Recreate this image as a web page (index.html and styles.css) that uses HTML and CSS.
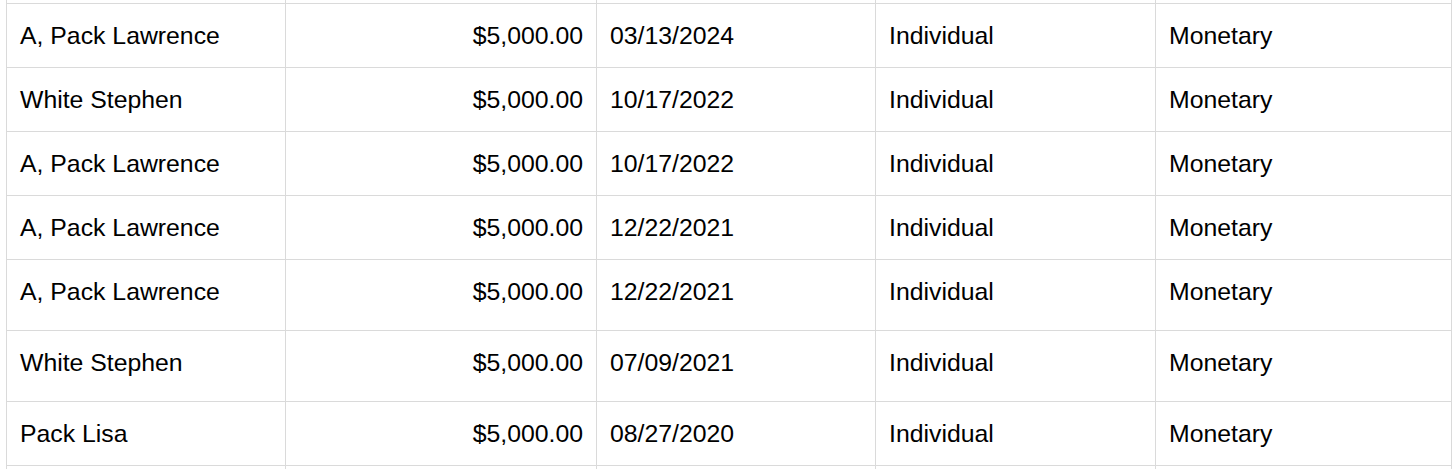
FILE: index.html
```html
<!DOCTYPE html>
<html lang="en">
<head>
<meta charset="utf-8">
<title>Contributions</title>
<link rel="stylesheet" href="styles.css">
</head>
<body>
<div class="sheet">
  <div class="row cut-top"><div class="cell"></div><div class="cell"></div><div class="cell"></div><div class="cell"></div><div class="cell"></div></div>
  <div class="row"><div class="cell">A, Pack Lawrence</div><div class="cell num">$5,000.00</div><div class="cell">03/13/2024</div><div class="cell">Individual</div><div class="cell">Monetary</div></div>
  <div class="row"><div class="cell">White Stephen</div><div class="cell num">$5,000.00</div><div class="cell">10/17/2022</div><div class="cell">Individual</div><div class="cell">Monetary</div></div>
  <div class="row"><div class="cell">A, Pack Lawrence</div><div class="cell num">$5,000.00</div><div class="cell">10/17/2022</div><div class="cell">Individual</div><div class="cell">Monetary</div></div>
  <div class="row"><div class="cell">A, Pack Lawrence</div><div class="cell num">$5,000.00</div><div class="cell">12/22/2021</div><div class="cell">Individual</div><div class="cell">Monetary</div></div>
  <div class="row tall"><div class="cell">A, Pack Lawrence</div><div class="cell num">$5,000.00</div><div class="cell">12/22/2021</div><div class="cell">Individual</div><div class="cell">Monetary</div></div>
  <div class="row tall"><div class="cell">White Stephen</div><div class="cell num">$5,000.00</div><div class="cell">07/09/2021</div><div class="cell">Individual</div><div class="cell">Monetary</div></div>
  <div class="row"><div class="cell">Pack Lisa</div><div class="cell num">$5,000.00</div><div class="cell">08/27/2020</div><div class="cell">Individual</div><div class="cell">Monetary</div></div>
  <div class="row cut-bottom"><div class="cell"></div><div class="cell"></div><div class="cell"></div><div class="cell"></div><div class="cell"></div></div>
</div>
</body>
</html>
```
FILE: styles.css
```css
html, body {
  margin: 0;
  padding: 0;
  background: #ffffff;
  overflow: hidden;
}

.sheet {
  margin-left: 6px;
  width: 1445px;
  border-left: 1px solid #dadada;
  font-family: "Liberation Sans", Arial, sans-serif;
  font-size: 24.8px;
  line-height: 28px;
  color: #000000;
}

.row {
  display: grid;
  grid-template-columns: 279px 311px 279px 280px 296px;
  height: 64px;
}

.row.tall {
  height: 71px;
}

.row.cut-top {
  height: 4px;
}

.row.cut-bottom {
  height: 6px;
}

.cell {
  box-sizing: border-box;
  border-right: 1px solid #dadada;
  border-bottom: 1px solid #dadada;
  padding: 18px 13px 0 13px;
  display: flex;
  align-items: flex-start;
  white-space: nowrap;
  overflow: hidden;
}

.cut-top .cell,
.cut-bottom .cell {
  padding: 0;
}

.cut-bottom .cell {
  border-bottom: none;
}

.cell.num {
  justify-content: flex-end;
}
```
